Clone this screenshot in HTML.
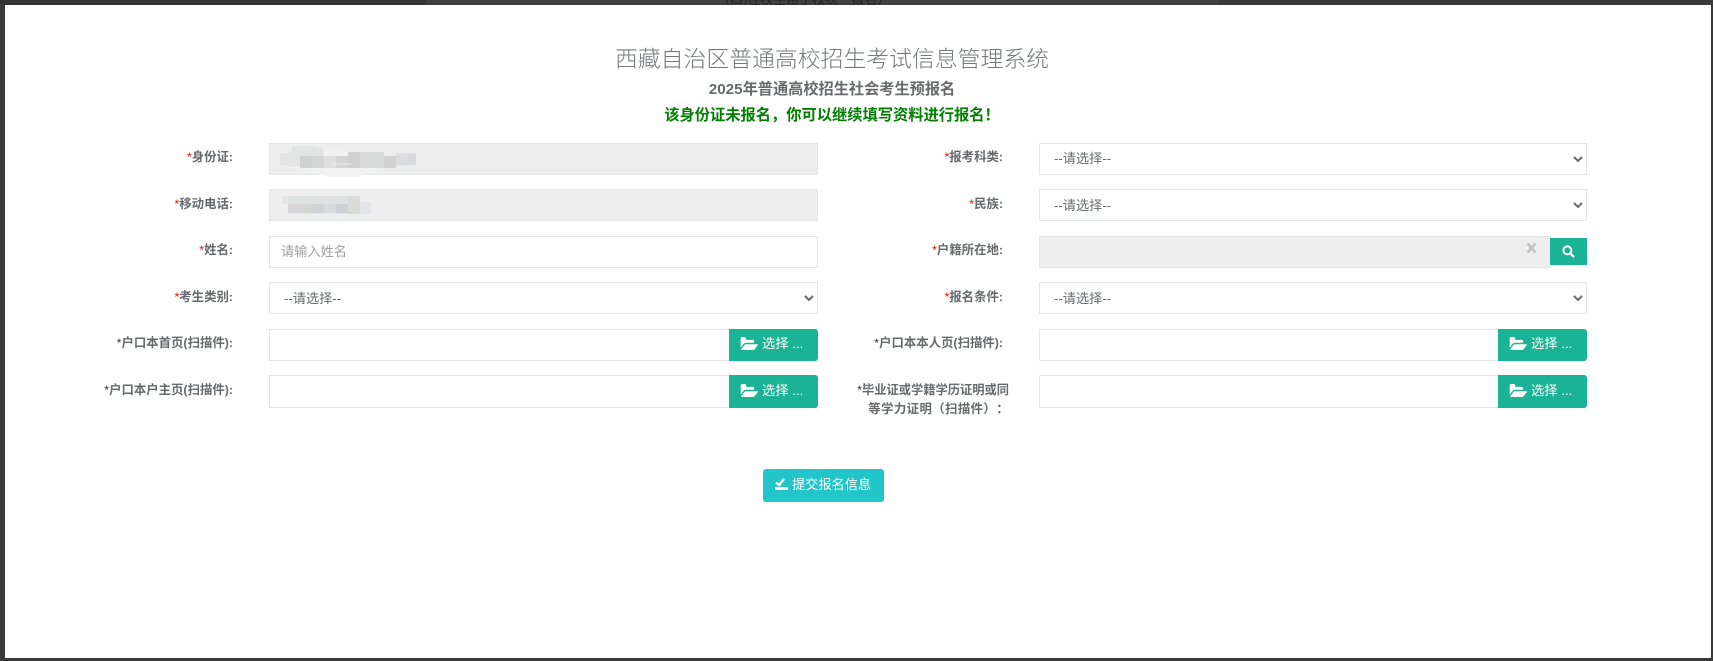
<!DOCTYPE html>
<html lang="zh-CN"><head><meta charset="utf-8"><title>预报名</title>
<style>
html,body{margin:0;padding:0;width:1713px;height:661px;overflow:hidden;background:#3a3a3a}
body{position:relative;font-family:"Liberation Sans","Noto Sans CJK SC",sans-serif;color:#676a6c;text-spacing-trim:space-all}
.a{position:absolute}
#w{position:absolute;left:5px;top:5px;width:1706px;height:653px;background:#fff}
.c{position:absolute;left:0;width:1664px;text-align:center;white-space:nowrap}
.l{position:absolute;text-align:right;font-size:12.4px;font-weight:bold;line-height:18px;color:#676a6c;white-space:nowrap}
.l i{font-style:normal;color:#f00;font-weight:normal}
.l b{font-weight:normal;color:#333}
.f{position:absolute;box-sizing:border-box;border:1px solid #e5e6e7;background:#fff;height:32px}
.d{background:#eee}
select{position:absolute;box-sizing:border-box;height:32px;border:1px solid #e5e6e7;background:#fff;color:#676a6c;font:13.2px "Liberation Sans","Noto Sans CJK SC",sans-serif;padding:0 10px;border-radius:0;outline:0}
.b{position:absolute;background:#1ab394;color:#fff;width:89px;border-radius:0 3px 3px 0;font-size:13.3px}
.b svg{position:absolute;left:11px;top:8px}
.b span{position:absolute;left:33px;top:0;white-space:nowrap}
</style></head><body>
<div class="a" style="left:0;top:0;width:426px;height:5px;background:#343434"></div>
<div class="a" style="left:426px;top:0;width:792px;height:5px;background:#404040"></div>
<div class="a" style="left:717px;top:-9px;font-size:13px;line-height:18px;color:#222;white-space:nowrap">（四)往校生由于校统一报名）</div>
<div id="w"></div>

<div class="c" style="top:41px;font-size:22.85px;line-height:36px;color:#76787a;font-weight:300">西藏自治区普通高校招生考试信息管理系统</div>
<div class="c" style="top:80px;font-size:15.2px;line-height:20px;font-weight:bold;color:#676a6c">2025年普通高校招生社会考生预报名</div>
<div class="c" style="top:106px;font-size:15.25px;line-height:20px;font-weight:bold;color:#008000">该身份证未报名，你可以继续填写资料进行报名！</div>

<!-- left labels -->
<div class="l" style="right:1480px;top:148px"><i>*</i>身份证:</div>
<div class="l" style="right:1480px;top:195px"><i>*</i>移动电话:</div>
<div class="l" style="right:1480px;top:241px"><i>*</i>姓名:</div>
<div class="l" style="right:1480px;top:288px"><i>*</i>考生类别:</div>
<div class="l" style="right:1480px;top:334px"><b>*</b>户口本首页(扫描件):</div>
<div class="l" style="right:1480px;top:381px"><b>*</b>户口本户主页(扫描件):</div>
<!-- right labels -->
<div class="l" style="right:710px;top:148px"><i>*</i>报考科类:</div>
<div class="l" style="right:710px;top:195px"><i>*</i>民族:</div>
<div class="l" style="right:710px;top:241px"><i>*</i>户籍所在地:</div>
<div class="l" style="right:710px;top:288px"><i>*</i>报名条件:</div>
<div class="l" style="right:710px;top:334px"><b>*</b>户口本本人页(扫描件):</div>
<div class="l" style="right:704px;top:381px;font-size:12.25px"><b>*</b>毕业证或学籍学历证明或同</div>
<div class="l" style="right:704px;top:400px;letter-spacing:.4px">等学力证明（扫描件）：</div>

<!-- left fields -->
<div class="f d" style="left:269px;top:143px;width:549px"></div>
<div class="f d" style="left:269px;top:189px;width:549px"></div>
<div class="f" style="left:269px;top:236px;width:549px;padding-left:11px;font-size:13.2px;line-height:30px;color:#a0a0a0">请输入姓名</div>
<select style="left:269px;top:282px;width:549px"><option>--请选择--</option></select>
<div class="f" style="left:269px;top:329px;width:461px"></div>
<div class="f" style="left:269px;top:375px;width:461px;height:33px"></div>

<!-- right fields -->
<select style="left:1039px;top:143px;width:548px;padding-bottom:2px"><option>--请选择--</option></select>
<select style="left:1039px;top:189px;width:548px"><option>--请选择--</option></select>
<div class="f d" style="left:1039px;top:236px;width:512px"></div>
<select style="left:1039px;top:282px;width:548px"><option>--请选择--</option></select>
<div class="f" style="left:1039px;top:329px;width:460px"></div>
<div class="f" style="left:1039px;top:375px;width:460px;height:33px"></div>

<!-- clear x -->
<svg class="a" style="left:1526px;top:242px" width="11" height="12" viewBox="0 0 11 12"><path d="M1.500 1.500l8 9M9.500 1.500l-8 9" stroke="#c4c4c4" stroke-width="2.600" fill="none"/></svg>
<!-- search -->
<div class="a" style="left:1550px;top:238px;width:37px;height:27px;background:#1ab394"></div>
<svg class="a" style="left:1562px;top:245px" width="13" height="13" viewBox="0 0 14 14"><circle cx="5.800" cy="5.800" r="4.300" fill="none" stroke="#fff" stroke-width="2.200"/><path d="M9 9l4 4" stroke="#fff" stroke-width="2.400"/></svg>

<!-- file buttons -->
<div class="b" style="left:729px;top:329px;height:32px;line-height:29px"><svg width="18" height="13" viewBox="128 256 1717 1152" preserveAspectRatio="none"><path fill="#fff" d="M1845 931q0-35-53-35h-1088q-40 0-85.500 21.500t-71.500 52.500l-294 363q-18 24-18 40 0 35 53 35h1088q40 0 86-22t71-53l294-363q18-22 18-39zm-1141-163h768v-160q0-40-28-68t-68-28h-576q-40 0-68-28t-28-68v-64q0-40-28-68t-68-28h-320q-40 0-68 28t-28 68v853l256-315q44-53 116-87.500t140-34.500z"/></svg><span>选择 ...</span></div>
<div class="b" style="left:729px;top:375px;height:33px;line-height:31px"><svg style="top:9px" width="18" height="13" viewBox="128 256 1717 1152" preserveAspectRatio="none"><path fill="#fff" d="M1845 931q0-35-53-35h-1088q-40 0-85.500 21.500t-71.500 52.500l-294 363q-18 24-18 40 0 35 53 35h1088q40 0 86-22t71-53l294-363q18-22 18-39zm-1141-163h768v-160q0-40-28-68t-68-28h-576q-40 0-68-28t-28-68v-64q0-40-28-68t-68-28h-320q-40 0-68 28t-28 68v853l256-315q44-53 116-87.500t140-34.500z"/></svg><span>选择 ...</span></div>
<div class="b" style="left:1498px;top:329px;height:32px;line-height:29px"><svg width="18" height="13" viewBox="128 256 1717 1152" preserveAspectRatio="none"><path fill="#fff" d="M1845 931q0-35-53-35h-1088q-40 0-85.500 21.500t-71.500 52.500l-294 363q-18 24-18 40 0 35 53 35h1088q40 0 86-22t71-53l294-363q18-22 18-39zm-1141-163h768v-160q0-40-28-68t-68-28h-576q-40 0-68-28t-28-68v-64q0-40-28-68t-68-28h-320q-40 0-68 28t-28 68v853l256-315q44-53 116-87.500t140-34.500z"/></svg><span>选择 ...</span></div>
<div class="b" style="left:1498px;top:375px;height:33px;line-height:31px"><svg style="top:9px" width="18" height="13" viewBox="128 256 1717 1152" preserveAspectRatio="none"><path fill="#fff" d="M1845 931q0-35-53-35h-1088q-40 0-85.500 21.500t-71.500 52.500l-294 363q-18 24-18 40 0 35 53 35h1088q40 0 86-22t71-53l294-363q18-22 18-39zm-1141-163h768v-160q0-40-28-68t-68-28h-576q-40 0-68-28t-28-68v-64q0-40-28-68t-68-28h-320q-40 0-68 28t-28 68v853l256-315q44-53 116-87.500t140-34.500z"/></svg><span>选择 ...</span></div>

<!-- submit -->
<div class="a" style="left:763px;top:469px;width:121px;height:33px;background:#23c6c8;border-radius:3px;color:#fff;font-size:13.2px;line-height:32px;white-space:nowrap">
<svg class="a" style="left:12px;top:9px" width="13" height="13" viewBox="0 0 13 13"><path d="M1 4.500l3 2.500 5-6" stroke="#fff" stroke-width="2.400" fill="none"/><rect x="0" y="9" width="13" height="3" fill="#fff"/></svg>
<span class="a" style="left:29px;top:0">提交报名信息</span></div>

<!-- mosaic blur -->
<svg class="a" style="left:260px;top:130px" width="200" height="90" viewBox="0 0 600 270">
<path d="M96 48H156L264 66H370V114L300 140H200L120 114H96Z" fill="#f2f2f2"/>
<path d="M96 48H156L190 54V78H96Z" fill="#e2e3e3"/>
<rect x="60" y="70" width="24" height="35" fill="#e3e3e3"/>
<rect x="84" y="66" width="36" height="44" fill="#e4e4e4"/>
<rect x="120" y="78" width="36" height="36" fill="#cfd1d0"/>
<rect x="156" y="78" width="36" height="36" fill="#d4d6d5"/>
<rect x="192" y="78" width="36" height="36" fill="#dfdfdf"/>
<rect x="228" y="78" width="36" height="36" fill="#d4d4d4"/>
<rect x="264" y="66" width="36" height="48" fill="#cfcfcd"/>
<rect x="300" y="66" width="36" height="48" fill="#d8dada"/>
<rect x="336" y="66" width="36" height="48" fill="#d8dada"/>
<rect x="372" y="78" width="36" height="36" fill="#d2d1cf"/>
<rect x="408" y="70" width="36" height="36" fill="#dcdcde"/>
<rect x="444" y="70" width="24" height="36" fill="#d8dade"/>
<rect x="216" y="101" width="60" height="2" fill="#f5f5f5"/>
<rect x="66" y="198" width="18" height="24" fill="#e6e6e6"/>
<rect x="84" y="198" width="108" height="24" fill="#dfe0e0"/>
<rect x="192" y="198" width="72" height="24" fill="#dfe0e3"/>
<rect x="264" y="198" width="36" height="54" fill="#dadad8"/>
<rect x="84" y="222" width="36" height="28" fill="#d6d6d8"/>
<rect x="120" y="222" width="36" height="28" fill="#d4d5d4"/>
<rect x="156" y="222" width="36" height="28" fill="#d0d2d6"/>
<rect x="192" y="222" width="36" height="28" fill="#d9dadb"/>
<rect x="228" y="222" width="36" height="28" fill="#cfd0d4"/>
<rect x="300" y="216" width="33" height="36" fill="#e2e4e8"/>
</svg>
</body></html>
